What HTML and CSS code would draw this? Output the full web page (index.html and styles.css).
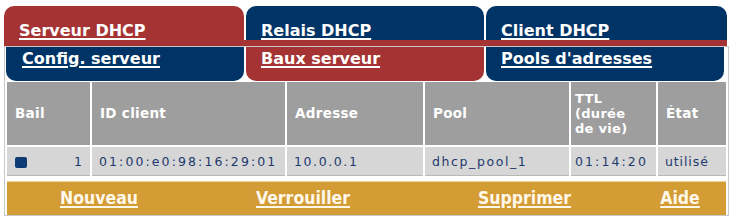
FILE: index.html
```html
<!DOCTYPE html>
<html lang="fr">
<head>
<meta charset="utf-8">
<title>Baux serveur DHCP</title>
<link rel="stylesheet" href="styles.css">
</head>
<body>
<div class="dhcp">
  <nav class="tabs">
    <div class="tab active"><a href="#">Serveur DHCP</a></div>
    <div class="tab"><a href="#">Relais DHCP</a></div>
    <div class="tab"><a href="#">Client DHCP</a></div>
  </nav>
  <div class="panel">
    <nav class="subtabs">
      <div class="subtab"><a href="#">Config. serveur</a></div>
      <div class="subtab active"><a href="#">Baux serveur</a></div>
      <div class="subtab"><a href="#">Pools d'adresses</a></div>
    </nav>
    <table class="leases">
      <colgroup>
        <col class="c-bail"><col class="c-id"><col class="c-addr"><col class="c-pool"><col class="c-ttl"><col class="c-state">
      </colgroup>
      <thead>
        <tr>
          <th>Bail</th>
          <th>ID client</th>
          <th>Adresse</th>
          <th>Pool</th>
          <th class="ttl">TTL<br>(durée<br>de vie)</th>
          <th>État</th>
        </tr>
      </thead>
      <tbody>
        <tr>
          <td class="bail"><span class="check"></span><span class="num">1</span></td>
          <td class="wide">01:00:e0:98:16:29:01</td>
          <td>10.0.0.1</td>
          <td>dhcp_pool_1</td>
          <td class="ttl wide">01:14:20</td>
          <td class="narrow">utilisé</td>
        </tr>
      </tbody>
    </table>
    <div class="actions">
      <a href="#">Nouveau</a>
      <a href="#">Verrouiller</a>
      <a href="#">Supprimer</a>
      <a href="#">Aide</a>
    </div>
  </div>
</div>
</body>
</html>
```

FILE: styles.css
```css
html, body {
  margin: 0;
  padding: 0;
  background: #ffffff;
}

body {
  font-family: "DejaVu Sans", Verdana, sans-serif;
}

.dhcp {
  padding: 6px 0 0 4px;
  width: 725px;
}

a {
  color: #ffffff;
  text-decoration: underline;
  text-decoration-thickness: 2px;
  text-underline-offset: 2px;
}

/* top tabs */
.tabs {
  display: grid;
  grid-template-columns: 240px 238px 241px;
  column-gap: 2px;
  width: 723px;
  border-bottom: 6px solid #a63333;
}

.tab {
  box-sizing: border-box;
  height: 34px;
  padding: 15px 0 0 15px;
  background: #003366;
  border-radius: 10px 10px 0 0;
  font-size: 16px;
  font-weight: bold;
  line-height: 19px;
}

.tab.active {
  background: #a63333;
}

/* panel */
.panel {
  box-sizing: border-box;
  width: 725px;
  border: 1px solid #c8c8c8;
}

.subtabs {
  display: grid;
  grid-template-columns: 238px 238px 238px;
  column-gap: 2px;
  margin-left: 1px;
}

.subtab {
  box-sizing: border-box;
  height: 34px;
  padding: 2px 0 0 15px;
  background: #003366;
  border-radius: 0 0 10px 10px;
  font-size: 16px;
  font-weight: bold;
  line-height: 19px;
}

.subtab:first-child {
  padding-left: 16px;
}

.subtab.active {
  background: #a63333;
}

/* table */
.leases {
  width: 100%;
  table-layout: fixed;
  border-collapse: separate;
  border-spacing: 2px;
  margin-top: -1px;
}

.c-bail { width: 83px; }
.c-id { width: 193px; }
.c-addr { width: 136px; }
.c-pool { width: 144px; }
.c-ttl { width: 85px; }
.c-state { width: 68px; }

.leases th {
  height: 63px;
  padding: 0 0 0 8px;
  box-sizing: border-box;
  background: #9e9e9e;
  color: #ffffff;
  font-size: 13.5px;
  font-weight: bold;
  line-height: 15px;
  letter-spacing: 0.3px;
  text-align: left;
  vertical-align: middle;
}

.leases th.ttl {
  font-size: 13px;
  line-height: 15px;
}

.leases th.ttl,
.leases td.ttl {
  padding-left: 4px;
}

.leases td {
  height: 29px;
  box-sizing: border-box;
  padding: 0 0 0 7px;
  background: #d6d6d6;
  border-bottom: 1px solid #b8b8b8;
  color: #1e3a6e;
  font-size: 12.5px;
  letter-spacing: 1.6px;
  white-space: nowrap;
  vertical-align: middle;
}

.leases td.wide {
  letter-spacing: 2.1px;
}

.leases td.narrow {
  letter-spacing: 0.9px;
}

.leases td.bail {
  padding: 0 8px;
}

.check {
  display: inline-block;
  width: 12px;
  height: 11px;
  border-radius: 2px;
  background: #0d3a75;
  vertical-align: middle;
}

.num {
  float: right;
  letter-spacing: 0;
}

/* actions bar */
.actions {
  display: grid;
  grid-template-columns: 184fr 224fr 219fr 92fr;
  align-items: center;
  height: 34px;
  margin: 3px 2px 0 2px;
  background: #d49c34;
  border-top: 1px solid #ecd3a0;
  box-sizing: border-box;
}

.actions a {
  justify-self: center;
  color: #fff8ea;
  font-size: 17.5px;
  font-weight: bold;
  font-stretch: condensed;
  line-height: 19px;
}
```
